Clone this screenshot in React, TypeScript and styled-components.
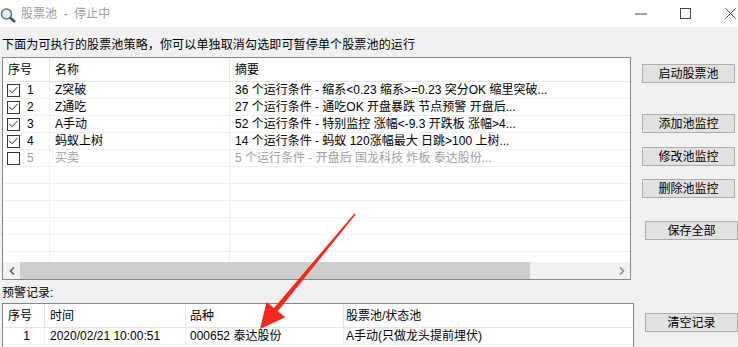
import styled, { createGlobalStyle } from 'styled-components';

const GlobalStyle = createGlobalStyle`
  html, body {
    margin: 0;
    padding: 0;
    overflow: hidden;
  }
  body {
    font-family: "Liberation Sans", "Noto Sans CJK SC", sans-serif;
    font-size: 12px;
    color: #000;
  }
`;

const Window = styled.div`
  position: relative;
  width: 738px;
  height: 347px;
  overflow: hidden;
  background: #f0f0f0;
`;

const TitleBar = styled.div`
  height: 27px;
  background: #fff;
  display: flex;
  align-items: center;
`;

const TitleText = styled.span`
  margin-left: 5px;
  color: #9a9a9a;
  line-height: 16px;
  white-space: pre;
`;

const Controls = styled.div`
  margin-left: auto;
  margin-right: -15px;
  display: flex;
  align-items: center;
  height: 100%;
`;

const ControlBtn = styled.div`
  width: 45px;
  flex-shrink: 0;
  height: 100%;
  display: flex;
  align-items: center;
  justify-content: center;
`;

const Hint = styled.div`
  height: 30px;
  padding: 10px 0 0 2px;
  box-sizing: border-box;
  line-height: 16px;
  letter-spacing: 0.15px;
`;

const Section = styled.div`
  display: flex;
  align-items: flex-start;
  padding-left: 2px;
`;

const ListBox = styled.div<{ $h: number }>`
  width: 633px;
  height: ${(p) => p.$h}px;
  box-sizing: border-box;
  border: 1px solid #828790;
  background: #fff;
  display: flex;
  flex-direction: column;
  overflow: hidden;
`;

const HeadRow = styled.div<{ $h: number }>`
  display: flex;
  height: ${(p) => p.$h}px;
  flex-shrink: 0;
  box-sizing: border-box;
  border-bottom: 1px solid #e5e5e5;
`;

const HeadCell = styled.div<{ $w?: number; $pad?: number }>`
  ${(p) => (p.$w ? `width: ${p.$w}px;` : 'flex: 1;')}
  flex-shrink: 0;
  box-sizing: border-box;
  padding-left: ${(p) => p.$pad ?? 5}px;
  border-right: 1px solid #e5e5e5;
  display: flex;
  align-items: center;
  line-height: 16px;
  white-space: nowrap;
  &:last-child {
    border-right: none;
  }
`;

const Rows = styled.div`
  flex: 1;
  overflow: hidden;
`;

const Row = styled.div<{ $muted?: boolean }>`
  display: flex;
  height: 17px;
  box-sizing: border-box;
  border-bottom: 1px solid #f0f0f0;
  color: ${(p) => (p.$muted ? '#a0a0a0' : '#000')};
`;

const Cell = styled.div<{ $w?: number; $pad?: number; $right?: boolean }>`
  ${(p) => (p.$w ? `width: ${p.$w}px;` : 'flex: 1;')}
  flex-shrink: 0;
  box-sizing: border-box;
  padding-left: ${(p) => p.$pad ?? 5}px;
  padding-right: ${(p) => (p.$right ? 14 : 0)}px;
  border-right: 1px solid #f0f0f0;
  display: flex;
  align-items: center;
  justify-content: ${(p) => (p.$right ? 'flex-end' : 'flex-start')};
  line-height: 16px;
  white-space: nowrap;
  overflow: hidden;
  &:last-child {
    border-right: none;
  }
`;

const Check = styled.span`
  width: 13px;
  height: 13px;
  box-sizing: border-box;
  border: 1px solid #333;
  background: #fff;
  display: inline-flex;
  align-items: center;
  justify-content: center;
  margin-right: 7px;
`;

const HScroll = styled.div`
  height: 17px;
  flex-shrink: 0;
  display: flex;
  background: #f0f0f0;
`;

const ScrollArrow = styled.div`
  width: 17px;
  display: flex;
  align-items: center;
  justify-content: center;
`;

const ScrollThumb = styled.div`
  width: 510px;
  background: #cdcdcd;
`;

const ScrollTrack = styled.div`
  flex: 1;
`;

const ButtonCol = styled.div`
  display: flex;
  flex-direction: column;
  margin-left: 11px;
`;

const Button = styled.div<{ $top: number; $shift?: number }>`
  width: 93px;
  height: 19px;
  margin-top: ${(p) => p.$top}px;
  margin-left: ${(p) => p.$shift ?? 0}px;
  box-sizing: border-box;
  border: 1px solid #adadad;
  background: #e1e1e1;
  display: flex;
  align-items: center;
  justify-content: center;
  line-height: 16px;
  white-space: nowrap;
`;

const SubLabel = styled.div`
  height: 23px;
  padding: 5px 0 0 2px;
  box-sizing: border-box;
  line-height: 16px;
`;

const Overlay = styled.svg`
  position: absolute;
  left: 0;
  top: 0;
  pointer-events: none;
`;

type Strategy = { id: number; name: string; summary: string; on: boolean };

const strategies: Strategy[] = [
  { id: 1, name: 'Z突破', summary: '36 个运行条件 - 缩系<0.23 缩系>=0.23 突分OK 缩里突破...', on: true },
  { id: 2, name: 'Z通吃', summary: '27 个运行条件 - 通吃OK 开盘暴跌 节点预警 开盘后...', on: true },
  { id: 3, name: 'A手动', summary: '52 个运行条件 - 特别监控 涨幅<-9.3 开跌板 涨幅>4...', on: true },
  { id: 4, name: '蚂蚁上树', summary: '14 个运行条件 - 蚂蚁 120涨幅最大 日跳>100 上树...', on: true },
  { id: 5, name: '买卖', summary: '5 个运行条件 - 开盘后 国龙科技 炸板 泰达股份...', on: false },
];

const CheckMark = () => (
  <svg width="9" height="8" viewBox="0 0 9 8">
    <polyline points="0.5,4 3.2,6.8 8.5,0.8" fill="none" stroke="#333" strokeWidth="1" />
  </svg>
);

const TitleIcon = () => (
  <svg width="16" height="18" viewBox="0 0 16 18">
    <circle cx="6.5" cy="9" r="5" fill="#e4ecf5" stroke="#5d7591" strokeWidth="1.6" />
    <line x1="10" y1="12.5" x2="15" y2="17" stroke="#3e4f63" strokeWidth="2.4" />
  </svg>
);

export default function App() {
  return (
    <Window>
      <GlobalStyle />
      <TitleBar>
        <TitleIcon />
        <TitleText>股票池  -  停止中</TitleText>
        <Controls>
          <ControlBtn>
            <svg width="12" height="2" viewBox="0 0 12 2">
              <line x1="0" y1="1" x2="12" y2="1" stroke="#444" strokeWidth="1" />
            </svg>
          </ControlBtn>
          <ControlBtn>
            <svg width="11" height="11" viewBox="0 0 11 11">
              <rect x="0.5" y="0.5" width="10" height="10" fill="none" stroke="#444" strokeWidth="1" />
            </svg>
          </ControlBtn>
          <ControlBtn>
            <svg width="11" height="11" viewBox="0 0 11 11">
              <path d="M0.5 0.5 L10.5 10.5 M10.5 0.5 L0.5 10.5" stroke="#444" strokeWidth="1" />
            </svg>
          </ControlBtn>
        </Controls>
      </TitleBar>

      <Hint>下面为可执行的股票池策略，你可以单独取消勾选即可暂停单个股票池的运行</Hint>

      <Section>
        <ListBox $h={223}>
          <HeadRow $h={24}>
            <HeadCell $w={47}>序号</HeadCell>
            <HeadCell $w={180}>名称</HeadCell>
            <HeadCell>摘要</HeadCell>
          </HeadRow>
          <Rows>
            {strategies.map((s) => (
              <Row key={s.id} $muted={!s.on}>
                <Cell $w={47} $pad={4}>
                  <Check>{s.on && <CheckMark />}</Check>
                  {s.id}
                </Cell>
                <Cell $w={180}>{s.name}</Cell>
                <Cell>{s.summary}</Cell>
              </Row>
            ))}
            {Array.from({ length: 6 }).map((_, i) => (
              <Row key={`e${i}`}>
                <Cell $w={47} />
                <Cell $w={180} />
                <Cell />
              </Row>
            ))}
          </Rows>
          <HScroll>
            <ScrollArrow>
              <svg width="6" height="8" viewBox="0 0 6 8">
                <polyline points="5,0.5 1.5,4 5,7.5" fill="none" stroke="#606060" strokeWidth="1.6" />
              </svg>
            </ScrollArrow>
            <ScrollThumb />
            <ScrollTrack />
            <ScrollArrow>
              <svg width="6" height="8" viewBox="0 0 6 8">
                <polyline points="1,0.5 4.5,4 1,7.5" fill="none" stroke="#8a8a8a" strokeWidth="1.6" />
              </svg>
            </ScrollArrow>
          </HScroll>
        </ListBox>
        <ButtonCol>
          <Button $top={7}>启动股票池</Button>
          <Button $top={31}>添加池监控</Button>
          <Button $top={14}>修改池监控</Button>
          <Button $top={13}>删除池监控</Button>
          <Button $top={23} $shift={3}>
            保存全部
          </Button>
        </ButtonCol>
      </Section>

      <SubLabel>预警记录:</SubLabel>

      <Section>
        <ListBox $h={60}>
          <HeadRow $h={24}>
            <HeadCell $w={42}>序号</HeadCell>
            <HeadCell $w={141}>时间</HeadCell>
            <HeadCell $w={158} $pad={4}>
              品种
            </HeadCell>
            <HeadCell $pad={2}>股票池/状态池</HeadCell>
          </HeadRow>
          <Rows>
            <Row>
              <Cell $w={42} $right>
                1
              </Cell>
              <Cell $w={141}>2020/02/21 10:00:51</Cell>
              <Cell $w={158} $pad={4}>
                000652 泰达股份
              </Cell>
              <Cell $pad={2}>A手动(只做龙头提前埋伏)</Cell>
            </Row>
          </Rows>
        </ListBox>
        <ButtonCol>
          <Button $top={10}>清空记录</Button>
        </ButtonCol>
      </Section>

      <Overlay width="738" height="347" viewBox="0 0 738 347">
        <polygon
          points="355.6,214.5 277.8,311.3 285.2,317.3 260,329 266.6,302.1 274,308.1 354.4,213.5"
          fill="#f5281c"
        />
      </Overlay>
    </Window>
  );
}
